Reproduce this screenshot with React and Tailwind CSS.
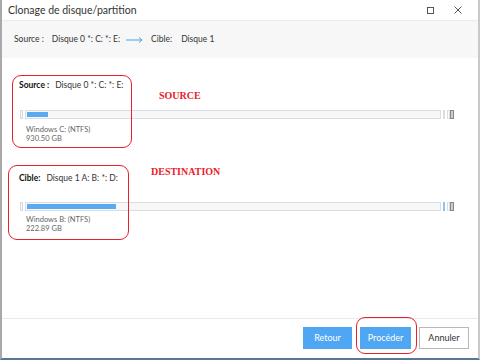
const Bar = ({ fill, mark }) => (
    <div className="flex items-center h-[9px]">
        <div className="w-[3px] h-[9px] border border-[#d8d8e0] bg-[#f8f8f8]" />
        <div className="ml-[2px] w-[416px] h-[9px] border border-[#dcdce6] bg-[#f7f7f7] p-px">
            <div className="h-full bg-[#5aaaf2]" style={{ width: fill }} />
        </div>
        <div className={`ml-[2px] w-[2px] h-[9px] border ${mark ? 'border-[#8cc4f4] bg-[#d6eafc]' : 'border-[#dcdce0]'}`} />
        <div className="ml-[2px] w-[3px] h-[9px] border border-[#dcdce0]" />
        <div className="w-[4px] h-[9px] border border-[#888] bg-[#ccc]" />
    </div>
);

const App = () => {
    return (
        <div className="relative w-[480px] h-[360px] flex flex-col bg-white border-l-2 border-l-[#a9a9a9] border-r-2 border-r-[#c9c9c9] border-b-2 border-b-[#5a7791] font-['Lato',sans-serif] text-[#333]">
            {/* Title bar */}
            <div className="h-[21px] flex items-center justify-between pl-[6px] pr-[16px] border-b border-[#ececec]">
                <span className="text-[10.5px] leading-none">Clonage de disque/partition</span>
                <div className="flex items-center gap-[20px]">
                    <div className="w-[7px] h-[7px] border-[1.5px] border-[#555]" />
                    <svg width="8" height="8" viewBox="0 0 8 8" stroke="#555" strokeWidth="1">
                        <path d="M0.5 0.5 L7.5 7.5 M7.5 0.5 L0.5 7.5" />
                    </svg>
                </div>
            </div>

            {/* Summary strip */}
            <div className="h-[37px] flex items-center bg-[#f7f7f7] pl-[12px] text-[8.5px] leading-none">
                <span>Source :</span>
                <span className="ml-[8px]">Disque 0 *: C: *: E:</span>
                <svg className="ml-[6px]" width="17" height="6" viewBox="0 0 17 6" fill="none" stroke="#4aa3ee" strokeWidth="1">
                    <path d="M0 3 H16 M13 0.5 L16 3 L13 5.5" />
                </svg>
                <span className="ml-[8px]">Cible:</span>
                <span className="ml-[9px]">Disque 1</span>
            </div>

            {/* Main */}
            <div className="flex-1 pl-[17px] pt-[21px]">
                <div className="h-[12px] flex items-center text-[8.5px] leading-none">
                    <span className="font-bold text-[#111]">Source :</span>
                    <span className="ml-[6px]">Disque 0 *: C: *: E:</span>
                </div>
                <div className="mt-[19px] ml-px"><Bar fill="21px" /></div>
                <div className="pl-[7px] mt-[6px] text-[7.5px] leading-[9px] text-[#666]">
                    <div>Windows C: (NTFS)</div>
                    <div>930.50 GB</div>
                </div>

                <div className="mt-[29px] h-[12px] flex items-center text-[8.5px] leading-none">
                    <span className="font-bold text-[#111]">Cible:</span>
                    <span className="ml-[6px]">Disque 1 A: B: *: D:</span>
                </div>
                <div className="mt-[18px] ml-px"><Bar fill="89px" mark /></div>
                <div className="pl-[7px] mt-[4px] text-[7.5px] leading-[9px] text-[#666]">
                    <div>Windows B: (NTFS)</div>
                    <div>222.89 GB</div>
                </div>
            </div>

            {/* Footer */}
            <div className="h-[40px] border-t border-[#e6e9f0] flex items-start justify-end pr-[9px] pt-[8px] gap-[8px] text-[9px]">
                <button className="w-[49px] h-[22px] bg-[#4fa6f2] text-white">Retour</button>
                <button className="w-[51px] h-[22px] bg-[#4fa6f2] text-white">Procéder</button>
                <button className="w-[50px] h-[22px] bg-white border border-[#b8b8b8] text-[#333]">Annuler</button>
            </div>

            {/* Annotations */}
            <div className="absolute left-[10px] top-[75px] w-[120px] h-[73px] border-[1.5px] border-[#e8202a] rounded-[9px] pointer-events-none" />
            <div className="absolute left-[157px] top-[91px] text-[10px] font-bold text-[#e8202a] font-['Liberation_Serif',serif] leading-none">SOURCE</div>
            <div className="absolute left-[6px] top-[165px] w-[121px] h-[75px] border-[1.5px] border-[#e8202a] rounded-[9px] pointer-events-none" />
            <div className="absolute left-[149px] top-[167px] text-[10px] font-bold text-[#e8202a] font-['Liberation_Serif',serif] leading-none">DESTINATION</div>
            <div className="absolute left-[354px] top-[317px] w-[61px] h-[37px] border-[1.5px] border-[#e8202a] rounded-[9px] pointer-events-none" />
        </div>
    );
};

export default App;
